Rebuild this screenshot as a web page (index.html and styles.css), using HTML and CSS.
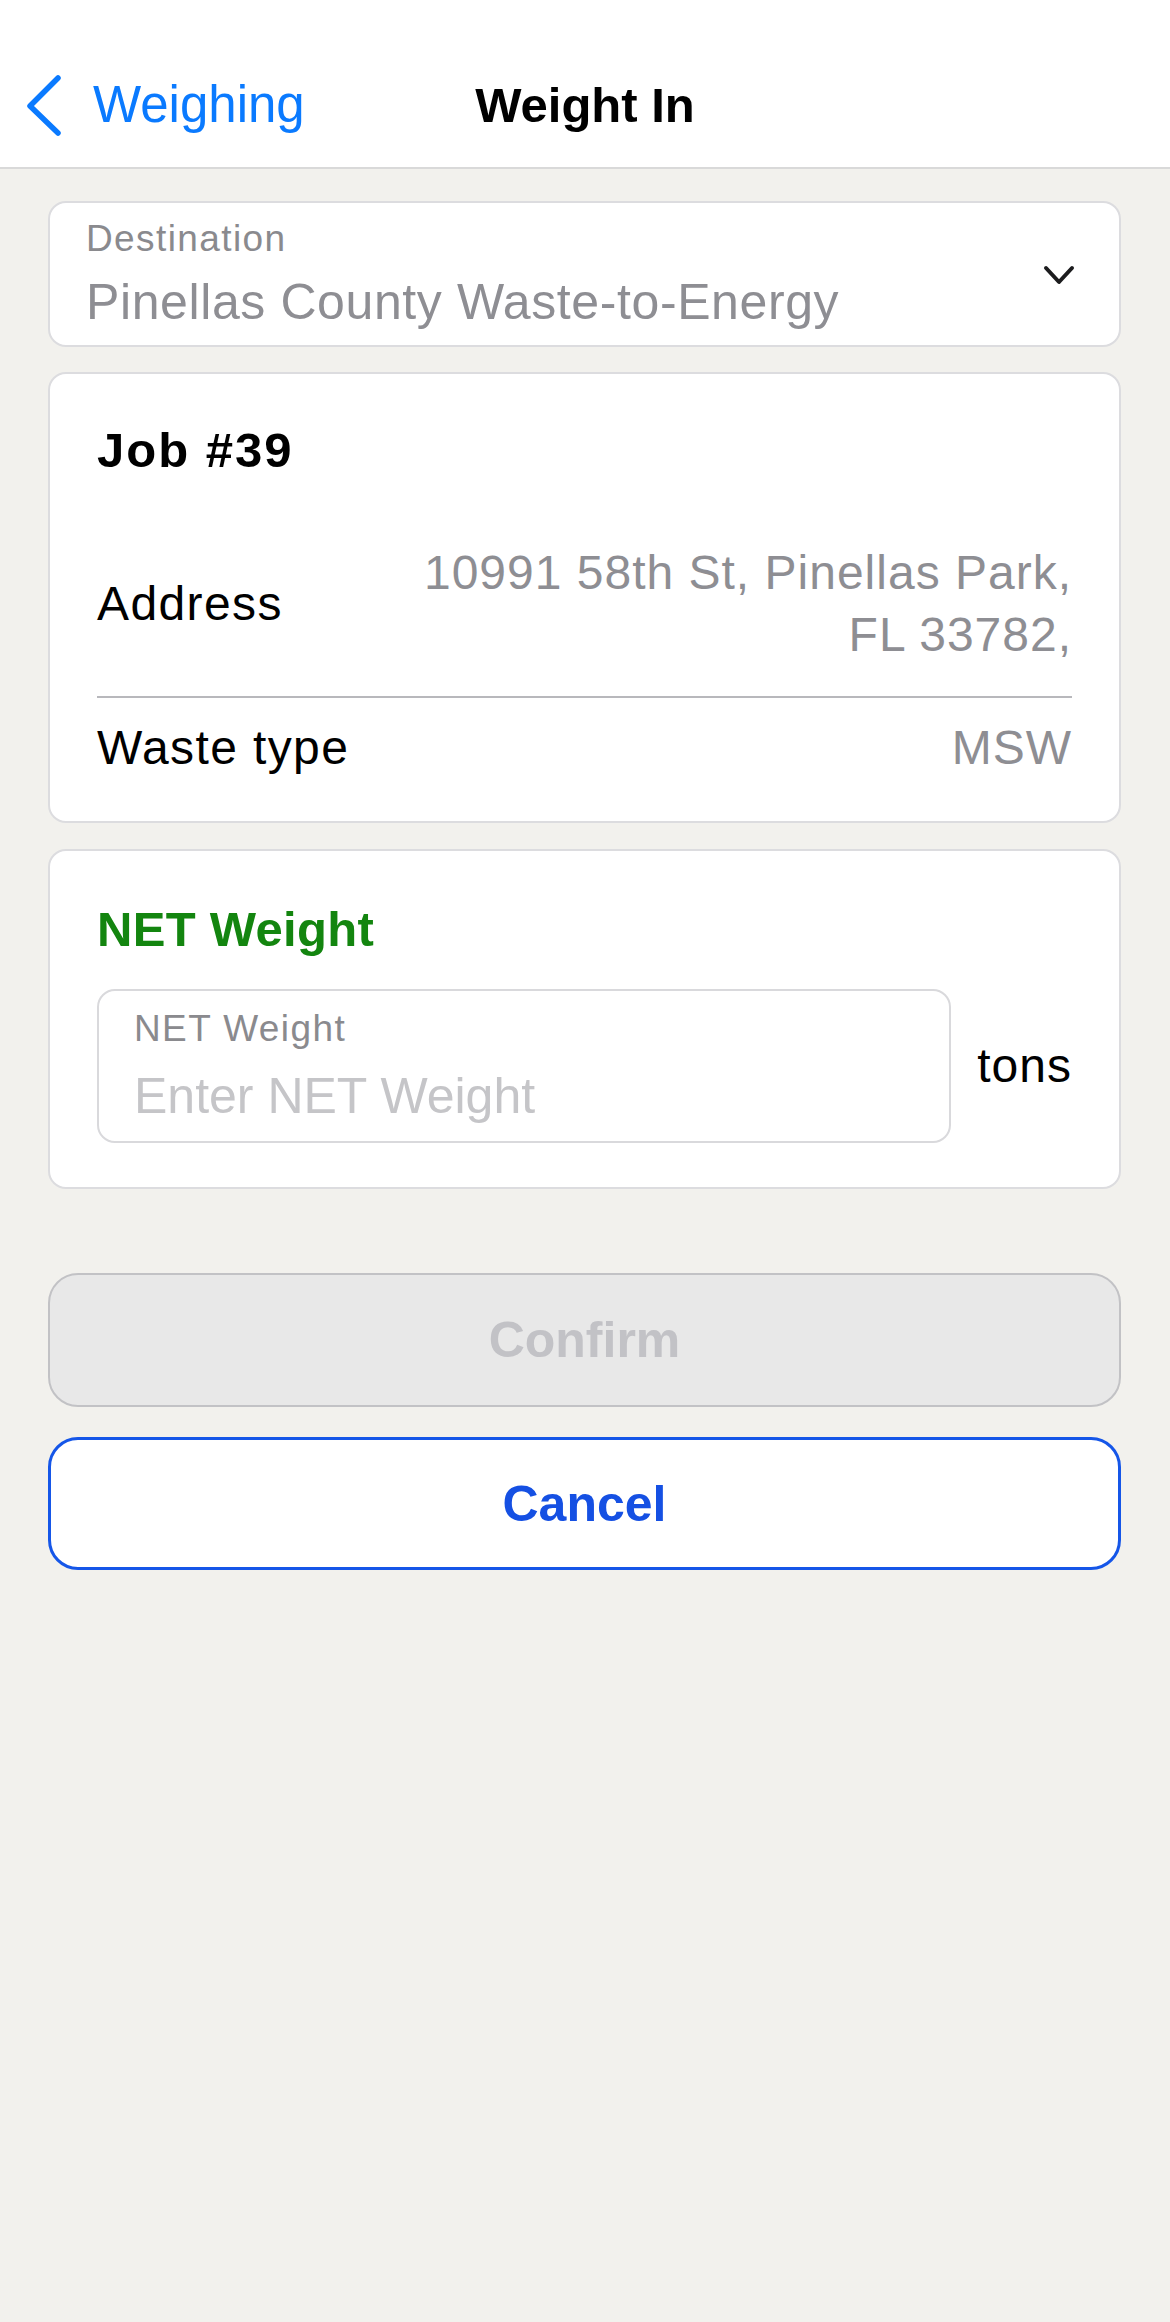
FILE: index.html
```html
<!DOCTYPE html>
<html lang="en">
<head>
<meta charset="utf-8">
<title>Weight In</title>
<link rel="stylesheet" href="styles.css">
</head>
<body>
<header class="navbar">
  <div class="nav-row">
    <a class="back">
      <svg class="back-icon" width="40" height="64" viewBox="0 0 40 64" aria-hidden="true">
        <polyline points="34,6 6,34 34,61" fill="none" stroke="#0a7aff" stroke-width="5.5" stroke-linecap="round" stroke-linejoin="round"/>
      </svg>
      <span class="back-label">Weighing</span>
    </a>
    <h1 class="nav-title">Weight In</h1>
  </div>
</header>

<main class="content">
  <section class="card select-card">
    <div class="select-text">
      <div class="field-label">Destination</div>
      <div class="select-value">Pinellas County Waste-to-Energy</div>
    </div>
    <svg class="select-chevron" width="32" height="22" viewBox="0 0 32 22" aria-hidden="true">
      <polyline points="3,3 16,17 29,3" fill="none" stroke="#1c1c1e" stroke-width="4" stroke-linecap="round" stroke-linejoin="round"/>
    </svg>
  </section>

  <section class="card job-card">
    <h2 class="job-title">Job #39</h2>
    <div class="info-row address-row">
      <span class="info-label">Address</span>
      <span class="info-value address-value">10991 58th St, Pinellas Park, FL 33782,</span>
    </div>
    <div class="divider"></div>
    <div class="info-row waste-row">
      <span class="info-label">Waste type</span>
      <span class="info-value">MSW</span>
    </div>
  </section>

  <section class="card weight-card">
    <h2 class="weight-title">NET Weight</h2>
    <div class="weight-row">
      <div class="input-box">
        <div class="field-label">NET Weight</div>
        <div class="input-placeholder">Enter NET Weight</div>
      </div>
      <span class="unit">tons</span>
    </div>
  </section>

  <div class="actions">
    <button class="btn btn-confirm" disabled>Confirm</button>
    <button class="btn btn-cancel">Cancel</button>
  </div>
</main>
</body>
</html>
```

FILE: styles.css
```css
* {
  box-sizing: border-box;
}

html, body {
  margin: 0;
  padding: 0;
}

body {
  background: #f2f1ed;
  font-family: "Liberation Sans", Arial, sans-serif;
  color: #000;
  min-height: 2322px;
}

/* Navigation bar */
.navbar {
  background: #ffffff;
  height: 169px;
  border-bottom: 2px solid #d9d9d9;
  padding-top: 40px;
}

.nav-row {
  position: relative;
  height: 128px;
  display: flex;
  align-items: center;
  justify-content: center;
}

.back {
  position: absolute;
  left: 24px;
  top: 0;
  height: 128px;
  display: flex;
  align-items: center;
  gap: 29px;
  color: #0a7aff;
  text-decoration: none;
}

.back-icon {
  display: block;
  margin-top: -1px;
}

.back-label {
  font-size: 51px;
  line-height: 62px;
  color: #0a7aff;
  margin-top: 2px;
}

.nav-title {
  margin: 0;
  font-size: 49px;
  line-height: 62px;
  font-weight: 700;
  margin-top: 2px;
}

/* Content */
.content {
  padding: 32px 49px 0 48px;
}

.card {
  background: #ffffff;
  border: 2px solid #dcdcdf;
  border-radius: 18px;
}

.field-label {
  font-size: 37px;
  line-height: 44px;
  color: #8a8a8e;
  letter-spacing: 1.4px;
}

/* Destination select */
.select-card {
  height: 146px;
  display: flex;
  align-items: center;
  padding: 14px 47px 13px 36px;
}

.select-text {
  flex: 1;
  display: flex;
  flex-direction: column;
  gap: 11px;
}

.select-value {
  font-size: 50px;
  line-height: 60px;
  color: #8e8e93;
  letter-spacing: 0.6px;
}

.select-chevron {
  display: block;
  margin-right: -3px;
  margin-top: 2px;
}

/* Job card */
.job-card {
  margin-top: 25px;
  padding: 48px 47px 42px 47px;
}

.job-title {
  margin: 0;
  font-size: 49px;
  line-height: 56px;
  font-weight: 700;
  letter-spacing: 2px;
}

.info-row {
  display: flex;
  align-items: center;
  justify-content: space-between;
  font-size: 48px;
  line-height: 62px;
  letter-spacing: 1.4px;
}

.address-row {
  margin-top: 64px;
}

.info-label {
  color: #000;
}

.info-value {
  color: #8e8e93;
  text-align: right;
  letter-spacing: 1px;
}

.address-value {
  max-width: 670px;
}

.divider {
  height: 2px;
  background: #b8b8bc;
  margin-top: 30px;
}

.waste-row {
  margin-top: 19px;
}

/* Weight card */
.weight-card {
  margin-top: 26px;
  padding: 50px 47px 44px 47px;
}

.weight-title {
  margin: 0;
  font-size: 49px;
  line-height: 56px;
  font-weight: 700;
  color: #13850f;
  letter-spacing: 0.3px;
}

.weight-row {
  margin-top: 32px;
  display: flex;
  align-items: center;
  gap: 26px;
}

.input-box {
  flex: 1;
  height: 154px;
  border: 2px solid #d9d9dc;
  border-radius: 18px;
  padding: 16px 35px 15px 35px;
  display: flex;
  flex-direction: column;
  gap: 15px;
}

.input-placeholder {
  font-size: 50px;
  line-height: 60px;
  color: #c5c5c8;
}

.unit {
  font-size: 48px;
  line-height: 62px;
  letter-spacing: 1px;
}

/* Buttons */
.actions {
  margin-top: 84px;
  display: flex;
  flex-direction: column;
  gap: 30px;
}

.btn {
  width: 100%;
  height: 134px;
  border-radius: 30px;
  font-family: "Liberation Sans", Arial, sans-serif;
  font-size: 50px;
  font-weight: 700;
  padding: 0;
  margin: 0;
}

.btn-confirm {
  background: #e8e8e8;
  border: 2px solid #c2c2c5;
  color: #c2c2c6;
}

.btn-cancel {
  height: 133px;
  background: #ffffff;
  border: 3px solid #1556e8;
  color: #1550e3;
}
```
